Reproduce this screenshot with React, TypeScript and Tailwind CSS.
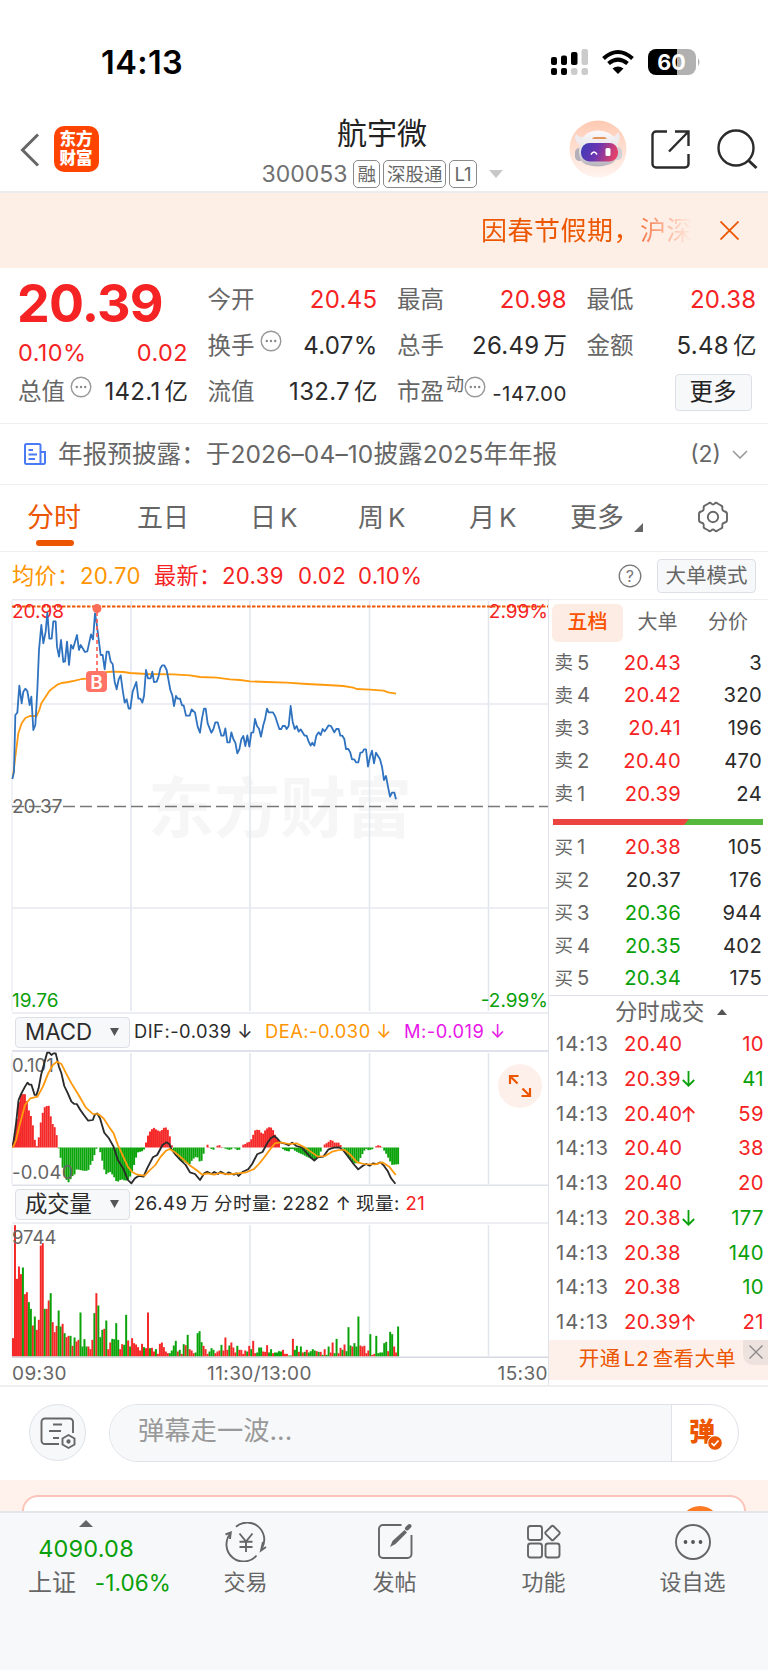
import type { ReactNode } from 'react';
import { clsx } from 'clsx';

const RED = 'text-[#f52323]';
const GREEN = 'text-[#09a009]';
const DARK = 'text-[#2b2b2b]';

const sellOrders = [
  { label: '卖', level: 5, price: '20.43', qty: 3, color: RED },
  { label: '卖', level: 4, price: '20.42', qty: 320, color: RED },
  { label: '卖', level: 3, price: '20.41', qty: 196, color: RED },
  { label: '卖', level: 2, price: '20.40', qty: 470, color: RED },
  { label: '卖', level: 1, price: '20.39', qty: 24, color: RED },
];

const buyOrders = [
  { label: '买', level: 1, price: '20.38', qty: 105, color: RED },
  { label: '买', level: 2, price: '20.37', qty: 176, color: DARK },
  { label: '买', level: 3, price: '20.36', qty: 944, color: GREEN },
  { label: '买', level: 4, price: '20.35', qty: 402, color: GREEN },
  { label: '买', level: 5, price: '20.34', qty: 175, color: GREEN },
];

const trades = [
  { price: '20.40', dir: '', qty: 10, color: RED },
  { price: '20.39', dir: 'down', qty: 41, color: GREEN },
  { price: '20.40', dir: 'up', qty: 59, color: RED },
  { price: '20.40', dir: '', qty: 38, color: RED },
  { price: '20.40', dir: '', qty: 20, color: RED },
  { price: '20.38', dir: 'down', qty: 177, color: GREEN },
  { price: '20.38', dir: '', qty: 140, color: GREEN },
  { price: '20.38', dir: '', qty: 10, color: GREEN },
  { price: '20.39', dir: 'up', qty: 21, color: RED },
];

// positive = up minute, negative = down minute
const volumes = [
  55, 394, 233, 270, 247, -267, 187, 193, -163, -143, 93, -120, 80, 110, 333, 340, -143, 143, 168, -190,
  103, 73, 92, -138, -90, 98, -70, 58, 62, -62, 32, -57, 45, 50, -132, -30, -52, -30, 30, 22,
  50, -130, 190, -153, -58, -80, 83, -108, 22, 42, -53, -52, -100, -50, 22, 37, -35, -125, 48, -30,
  55, 40, 36, 28, 18, 38, -28, 25, 132, -25, 26, 15, -22, 8, 38, 42, 28, 15, 10, -10,
  -18, -33, -47, 15, -20, 8, -37, 34, -65, 22, 18, 10, -12, -70, -76, -43, 32, 22, 8, -15,
  -25, -20, 10, 15, 18, -35, 18, 57, 20, -33, 42, 27, 12, -32, 20, 20, 8, 18, -15, 32,
  -22, 47, 10, -12, -27, -27, 15, 14, 34, -12, -22, 10, -12, -12, -16, -15, 20, 8, 8, -3,
  -3, 53, -20, -32, 14, -30, 12, -14, 20, -12, -16, -22, -18, 16, -14, 14, -5, 22, -5, -30,
  12, 42, -10, -53, 10, 26, -20, 36, -16, -88, -33, 30, -40, -30, -120, 33, 30, 32, 10, 18,
  -67, 5, 8, -62, -10, -12, -12, -40, -44, 16, -74, -67, 30, 12, -90,
];

const macdKeys: [number, number][] = [
  [34, 0], [45, 60], [56, 160], [72, 160], [80, 115], [90, 85], [97, 30], [101, 0], [107, 10], [112, 60],
  [118, 95], [124, 120], [130, 123], [136, 130], [141, 100], [147, 72], [157, 55], [162, 12], [166, -10], [170, -30],
  [176, -62], [182, -90], [192, -105], [204, -85], [210, -80], [215, -65], [235, -70], [247, -70], [255, -48], [262, -35],
  [268, -8], [274, 3], [280, -8], [286, -35], [292, -65], [298, -80], [308, -72], [318, -85], [328, -105], [340, -95],
  [352, -100], [362, -95], [374, -60], [380, -35], [386, -15], [402, -10], [406, 0], [412, 28], [418, 45], [430, 60],
  [440, 52], [450, 48], [460, 60], [468, 60], [474, 42], [480, 15], [484, -8], [492, -18], [505, -38], [520, -45],
  [530, -52], [540, -35], [547, -30], [552, -25], [558, -42], [565, -40], [570, -20], [576, 0], [581, 9], [590, -3],
  [598, -7], [604, 0], [613, 9], [620, 2], [630, -3], [645, -8], [655, 0], [668, -10], [676, 0], [684, 12],
  [690, 9], [695, 20], [700, 15], [706, 30], [716, 54], [728, 52], [735, 38], [745, 55], [757, 63], [768, 48],
  [774, 25], [780, 30], [786, 0], [800, -10], [812, -12], [817, 0], [822, -7], [835, -15], [850, -22], [860, -28],
  [880, -38], [892, -28], [900, -8], [908, 8], [918, 15], [928, 24], [938, 14], [948, 15], [956, 5], [962, -8],
  [975, -28], [990, -48], [1002, -47], [1015, -20], [1024, -3], [1032, -8], [1042, -6], [1052, 3], [1062, 8], [1070, 0],
  [1080, -15], [1092, -40], [1098, -52], [1116, -50],
];

const priceLine =
  '37,567 42,545 46,375 52,368 58,287 65,340 70,305 76,296 82,303 89,345 94,320 100,420 106,405 112,300 117,180 124,105 130,160 137,125 142,68 148,146 155,146 160,94 167,94 171,170 177,200 183,150 190,216 195,214 201,155 207,225 213,165 219,176 231,135 237,180 242,165 255,186 262,184 273,133 279,148 285,70 290,100 302,195 308,195 314,238 320,185 326,185 332,215 338,222 344,275 350,298 356,268 362,256 368,300 374,338 380,328 386,356 391,356 398,305 409,276 415,326 421,326 427,338 432,318 438,240 444,265 452,265 457,245 462,276 470,275 475,262 481,235 487,226 493,226 500,240 511,300 517,316 522,348 528,318 533,326 540,326 546,346 551,346 558,377 569,377 575,358 585,368 593,410 600,428 606,385 612,356 617,356 623,400 634,428 640,418 646,397 653,397 658,415 664,437 671,437 676,415 682,457 689,457 694,427 700,447 706,458 712,490 718,478 724,448 730,438 736,468 742,436 748,470 754,428 760,427 765,387 771,408 777,416 783,440 790,405 795,388 801,356 806,367 819,367 826,380 838,417 844,417 848,408 855,408 860,417 866,408 872,348 878,395 884,417 890,408 896,425 902,418 914,437 920,437 926,455 932,467 937,458 943,467 949,437 956,427 962,435 968,417 974,424 979,417 986,406 993,408 1003,427 1009,417 1016,417 1021,437 1027,437 1033,447 1038,477 1045,477 1051,488 1056,508 1063,508 1068,517 1075,517 1081,488 1087,487 1092,478 1098,478 1104,530 1110,500 1116,482 1122,520 1128,488 1134,498 1140,508 1146,530 1152,570 1158,558 1164,590 1170,620 1176,608 1183,608 1188,628';
const avgLine =
  '39,560 46,500 55,430 65,400 76,384 90,378 110,378 118,360 124,340 137,320 148,303 160,293 172,284 185,279 205,276 225,272 245,267 270,265 290,255 320,246 340,245 370,246 390,249 440,252 520,253 570,256 600,261 650,263 690,268 720,270 750,274 800,276 860,278 920,282 980,285 1030,288 1060,293 1070,297 1110,299 1150,302 1165,307 1188,311';
const difLine =
  '36,440 45,370 52,300 60,280 70,260 77,248 82,254 88,254 97,285 102,285 108,265 115,225 125,185 132,158 138,158 144,165 150,160 156,160 165,200 172,220 180,258 190,280 200,305 208,312 215,312 225,330 235,345 247,362 260,360 265,345 272,340 280,355 292,398 305,415 318,440 330,480 345,505 358,540 368,550 378,535 388,528 402,530 412,505 428,472 440,465 455,435 466,427 474,432 480,448 492,465 505,480 520,495 532,517 546,522 560,540 572,520 580,515 592,522 600,516 610,522 618,515 632,523 640,517 655,524 662,520 668,528 680,515 695,508 706,492 720,463 735,456 748,430 758,415 768,408 776,415 785,427 795,430 808,436 818,428 830,438 845,442 858,458 870,472 880,482 890,472 905,470 920,448 935,443 950,442 962,452 975,470 990,492 1003,508 1015,498 1025,492 1035,497 1045,490 1055,492 1065,487 1075,497 1085,512 1095,535 1107,551';
const deaLine =
  '36,442 45,420 55,375 70,315 85,295 105,290 120,260 135,220 148,195 160,185 172,192 185,220 200,250 220,285 240,322 260,342 275,342 290,355 305,380 318,400 330,435 345,470 358,500 370,516 385,524 405,527 420,510 435,495 450,470 465,452 475,447 488,455 510,475 530,495 550,510 566,524 580,520 600,524 615,519 640,523 665,520 690,517 710,508 725,492 740,472 755,450 770,430 785,427 810,432 830,430 850,440 870,455 890,470 910,468 930,455 950,450 965,450 980,463 1000,487 1020,492 1050,493 1070,487 1090,500 1108,525';

const STEP = 536 / 270; // one trading minute
const gridX = [131, 250, 369.5, 488.5];

function macdAt(x: number) {
  for (let i = 1; i < macdKeys.length; i++) {
    const [x1, y1] = macdKeys[i];
    if (x <= x1) {
      const [x0, y0] = macdKeys[i - 1];
      return y0 + ((x - x0) / (x1 - x0)) * (y1 - y0);
    }
  }
  return 0;
}

function GridLines({ top, bottom }: { top: number; bottom: number }) {
  return (
    <g stroke="#e3e6ee" strokeWidth="1.6">
      {gridX.map((x) => (
        <line key={x} x1={x} x2={x} y1={top} y2={bottom} />
      ))}
      <line x1="12" x2="12" y1={top} y2={bottom} strokeWidth="1" />
    </g>
  );
}

function Dots({ className }: { className?: string }) {
  return (
    <svg className={clsx('h-[22px] w-[22px] shrink-0', className)} viewBox="0 0 22 22" fill="none">
      <circle cx="11" cy="11" r="9.8" stroke="#999" strokeWidth="1.4" />
      <circle cx="6.8" cy="11" r="1.2" fill="#888" />
      <circle cx="11" cy="11" r="1.2" fill="#888" />
      <circle cx="15.2" cy="11" r="1.2" fill="#888" />
    </svg>
  );
}

function StatusBar() {
  return (
    <div className="flex h-[100px] items-start justify-between pt-[43px] pr-[68px] pl-[101px]">
      <span className="text-[32.5px] leading-[39px] font-semibold tracking-[0.4px] text-black">14:13</span>
      <svg className="mt-1 h-[30px] w-[152px]" viewBox="0 0 152 30">
        <g fill="#000">
          <rect x="3" y="10" width="6" height="8" rx="2" />
          <rect x="13" y="8.500" width="6" height="9.500" rx="2" />
          <rect x="23" y="5" width="6.500" height="13" rx="2" />
          <rect x="3" y="21" width="6" height="7" rx="2" />
          <rect x="13" y="21" width="6" height="7" rx="2" />
        </g>
        <g fill="#cbcbcb">
          <rect x="33.500" y="2" width="6.500" height="16" rx="2" />
          <rect x="23" y="21" width="6.500" height="7" rx="2.500" />
          <rect x="33.500" y="21" width="6.500" height="7" rx="2.500" />
        </g>
        <g fill="none" stroke="#000" strokeWidth="4">
          <path d="M55.500 11.500 Q70 -1.500 84.500 11.500" />
          <path d="M60.500 16.600 Q70 8.500 79.500 16.600" />
        </g>
        <path d="M64.500 21.500 Q70 17.500 75.500 21.500 L70 27 Z" fill="#000" />
        <clipPath id="cell">
          <rect x="100" y="2" width="48" height="26" rx="8" />
        </clipPath>
        <g clipPath="url(#cell)">
          <rect x="100" y="2" width="29" height="26" fill="#000" />
          <rect x="129" y="2" width="20" height="26" fill="#b1b1b1" />
        </g>
        <path d="M150 11 q3 4 0 8 z" fill="#b1b1b1" />
        <text x="123.500" y="22.500" textAnchor="middle" fontSize="21.5" fontWeight="700" fill="#fff">
          60
        </text>
      </svg>
    </div>
  );
}

function Robot() {
  return (
    <svg className="h-[58px] w-[58px]" viewBox="0 0 58 58">
      <defs>
        <linearGradient id="halo" x1="0" y1="0" x2="0" y2="1">
          <stop offset="0" stopColor="#ffc9b2" />
          <stop offset="1" stopColor="#fff4ef" />
        </linearGradient>
        <linearGradient id="visor" x1="0" y1="0" x2="1" y2="0.200">
          <stop offset="0" stopColor="#3a3bb8" />
          <stop offset="0.500" stopColor="#6c35b0" />
          <stop offset="1" stopColor="#e0406c" />
        </linearGradient>
        <linearGradient id="shell" x1="0" y1="0" x2="0" y2="1">
          <stop offset="0" stopColor="#fbf9fa" />
          <stop offset="0.6" stopColor="#e2dfe4" />
          <stop offset="1" stopColor="#b5b1ba" />
        </linearGradient>
      </defs>
      <circle cx="29" cy="29" r="28.500" fill="url(#halo)" />
      <path d="M10 25 Q4 19 7 14 Q10 18 17 17 Z M48 25 Q53 18 49 12 Q47 17 41 17 Z" fill="#efebee" />
      <rect x="6" y="28" width="9" height="13" rx="4.500" fill="#b3b0ba" />
      <rect x="44" y="27" width="9" height="13" rx="4.500" fill="#d3cfd6" />
      <path d="M10 31 Q11 11 29 10.500 Q48 11 49 30 Q49 42 40 44.500 Q29 48.500 17 44.500 Q10 42 10 31Z" fill="url(#shell)" />
      <path d="M23 19 L25 17 H36 L38 19 Z" fill="#e4945b" />
      <rect x="12" y="23" width="37" height="18.500" rx="8.500" fill="url(#visor)" />
      <path d="M22 34.500 q3 -5 6 0" fill="none" stroke="#fff" strokeWidth="1.600" />
      <rect x="36.500" y="28" width="5" height="8" rx="1.500" fill="#fff" />
    </svg>
  );
}

function Tag({ children }: { children: ReactNode }) {
  return (
    <span className="flex h-[28px] items-center rounded-[5px] border border-[#8a8a8a] px-[3px] text-[18.5px] leading-none text-[#666]">
      {children}
    </span>
  );
}

function Header() {
  return (
    <div className="flex h-[93px] justify-between border-b-2 border-[#ececee] pr-[10px] pl-[20px]">
      <div className="flex w-[229px] items-start pt-[26px]">
        <svg className="mt-[7px] h-[34px] w-[20px]" viewBox="0 0 20 34" fill="none" stroke="#666" strokeWidth="3">
          <path d="M18 1.500 2.500 17 18 32.500" />
        </svg>
        <div className="ml-[13.5px] flex h-[46px] w-[45px] flex-col items-center justify-center rounded-[10px] bg-[#ff4400] text-[16.5px] leading-[19px] font-black text-white">
          <span>东方</span>
          <span>财富</span>
        </div>
      </div>
      <div className="flex flex-col items-center">
        <h1 className="mt-[13px] text-[30px] leading-[40px] text-[#222]">航宇微</h1>
        <div className="mt-[7px] flex items-center gap-[3px]">
          <span className="mr-[3px] text-[23px] leading-[28px] text-[#707070]">300053</span>
          <Tag>融</Tag>
          <Tag>深股通</Tag>
          <Tag>
            <span className="px-[1px]">L1</span>
          </Tag>
          <svg className="ml-[9px] h-[8px] w-[14px]" viewBox="0 0 14 8">
            <path d="M0 0H14L7 8Z" fill="#c8c8c8" />
          </svg>
        </div>
      </div>
      <div className="flex w-[243px] items-start justify-end pt-[20px]">
        <Robot />
        <svg className="mt-[9px] ml-[23px] h-[41px] w-[41px]" viewBox="0 0 41 41" fill="none" stroke="#2b2b2b" strokeWidth="2.400">
          <path d="M17 2.500H6A3.500 3.500 0 0 0 2.500 6V35A3.500 3.500 0 0 0 6 38.500H35A3.500 3.500 0 0 0 38.500 35V25M38.500 17V2.500H25M38.500 2.500L19 22.500" />
        </svg>
        <svg className="mt-[8px] ml-[25px] h-[42px] w-[42px]" viewBox="0 0 42 42" fill="none" stroke="#2b2b2b" strokeWidth="2.400">
          <circle cx="20" cy="20" r="17.500" />
          <path d="M32 32L40.500 40" strokeWidth="3" />
        </svg>
      </div>
    </div>
  );
}

function Notice() {
  return (
    <div className="flex h-[75px] items-center justify-end bg-[#fdeee6] pr-[29px]">
      <div className="w-[211px] overflow-hidden bg-gradient-to-r from-[#ec5600] from-70% to-[#fdeee6] bg-clip-text text-[26px] leading-[36px] tracking-[0.5px] whitespace-nowrap text-transparent">
        因春节假期，沪深
      </div>
      <svg className="ml-[28px] h-[19px] w-[19px]" viewBox="0 0 19 19" stroke="#ec5600" strokeWidth="1.800">
        <path d="M.5 .5 18.500 18.500M18.500 .5 .5 18.500" />
      </svg>
    </div>
  );
}

type StatProps = { label: string; value: string; unit?: string; color?: string; extra?: ReactNode };

function Stat({ label, value, unit, color = DARK, extra }: StatProps) {
  return (
    <div className="flex h-[46px] items-center justify-between">
      <span className="flex items-center text-[23.5px] whitespace-nowrap text-[#666]">
        {label}
        {extra}
      </span>
      <span className={clsx('text-[24px] tracking-[0.3px] whitespace-nowrap', color)}>
        {value}
        {unit && <span className="ml-[4px] text-[23.5px] tracking-normal">{unit}</span>}
      </span>
    </div>
  );
}

function Quote() {
  return (
    <div className="grid h-[156px] grid-cols-[170px_170px_170px_170px] gap-x-[19.5px] border-b border-[#eee] pt-[9px] pl-[18px]">
      <div>
        <div className="ml-[-1px] h-[53px] text-[52px] leading-[53px] font-bold tracking-[-0.8px] text-[#f52323]">20.39</div>
        <div className="flex h-[39px] items-end justify-between text-[23.5px] leading-[32px] tracking-[0.4px] text-[#f52323]">
          <span>0.10%</span>
          <span>0.02</span>
        </div>
        <Stat label="总值" value="142.1" unit="亿" extra={<Dots className="mb-[10px] ml-[5px]" />} />
      </div>
      <div>
        <Stat label="今开" value="20.45" color={RED} />
        <Stat label="换手" value="4.07%" extra={<Dots className="mb-[10px] ml-[5px]" />} />
        <Stat label="流值" value="132.7" unit="亿" />
      </div>
      <div>
        <Stat label="最高" value="20.98" color={RED} />
        <Stat label="总手" value="26.49" unit="万" />
        <div className="flex h-[46px] items-center justify-between">
          <span className="flex items-center text-[23.5px] text-[#666]">
            市盈<span className="mb-[15px] ml-[2px] text-[18px]">动</span>
            <Dots className="mb-[10px]" />
          </span>
          <span className="mt-[4px] text-[20.5px] tracking-[0.5px] text-[#2b2b2b]">-147.00</span>
        </div>
      </div>
      <div>
        <Stat label="最低" value="20.38" color={RED} />
        <Stat label="金额" value="5.48" unit="亿" />
        <div className="flex h-[46px] items-center justify-end pr-[5px]">
          <button className="h-[37px] w-[77px] rounded-[4px] border border-[#dcdfe6] bg-[#f7f8fa] text-[23.5px] leading-[32px] text-[#222]">更多</button>
        </div>
      </div>
    </div>
  );
}

function NewsRow() {
  return (
    <div className="flex h-[61px] items-center border-b border-[#eee] pr-[20px] pl-[24px] text-[24.5px] text-[#666]">
      <svg className="h-[22px] w-[22px]" viewBox="0 0 22 22" fill="none" stroke="#4a7bf5" strokeWidth="2">
        <path d="M16.500 21H2.500A1.500 1.500 0 0 1 1 19.500V2.500A1.500 1.500 0 0 1 2.500 1H15A1.500 1.500 0 0 1 16.500 2.500V21H19.500A1.500 1.500 0 0 0 21 19.500V9H16.500M4.500 7H9M4.500 11.500H13M4.500 16H11" />
      </svg>
      <span className="ml-[12px] tracking-[0.13px]">年报预披露：于2026–04–10披露2025年年报</span>
      <span className="ml-auto text-[23px]">(2)</span>
      <svg className="ml-[11px] h-[9px] w-[16px]" viewBox="0 0 16 9" fill="none" stroke="#999" strokeWidth="1.600">
        <path d="M1 1 8 8 15 1" />
      </svg>
    </div>
  );
}

function PeriodTabs() {
  return (
    <div className="flex h-[67px] items-start border-b border-[#eee] pt-[14px] pl-[27px] text-[26px] leading-[38px] text-[#666]">
      <div className="flex w-[110px] flex-col items-start">
        <span className="text-[27px] text-[#ec5600]">分时</span>
        <span className="mt-[3px] ml-[9px] h-[6px] w-[38px] rounded-full bg-[#ec5600]" />
      </div>
      <span className="w-[113px]">五日</span>
      <span className="w-[108px]">日<span className="ml-[4px]">K</span></span>
      <span className="w-[111px]">周<span className="ml-[4px]">K</span></span>
      <span className="w-[101px]">月<span className="ml-[4px]">K</span></span>
      <span className="text-[27px]">更多</span>
      <svg className="mt-[24px] ml-[10px] h-[9px] w-[9px]" viewBox="0 0 9 9">
        <path d="M9 0V9H0Z" fill="#666" />
      </svg>
      <svg className="mt-[2px] ml-[54px] h-[32px] w-[32px]" viewBox="0 0 32 32" fill="none" stroke="#666" strokeWidth="1.900" strokeLinejoin="round">
        <path d="M11.500 2.500 Q13 1 14.300 2.600 Q16 4.200 17.700 2.600 Q19 1 20.500 2.500 L24 4.500 Q25.800 5.200 25.300 7.300 Q25 9.700 27.200 10.200 Q30 10.700 30 13 V19 Q30 21.300 27.200 21.800 Q25 22.300 25.300 24.700 Q25.800 26.800 24 27.500 L20.500 29.500 Q19 31 17.700 29.400 Q16 27.800 14.300 29.400 Q13 31 11.500 29.500 L8 27.500 Q6.200 26.800 6.700 24.700 Q7 22.300 4.800 21.800 Q2 21.300 2 19 V13 Q2 10.700 4.800 10.200 Q7 9.700 6.700 7.300 Q6.200 5.200 8 4.500 Z" />
        <circle cx="16" cy="16" r="5.200" />
      </svg>
    </div>
  );
}

function PriceBar() {
  return (
    <div className="flex h-[47px] items-center pr-[12px] pl-[12px] text-[22.2px] tracking-[0.3px] text-[#f52323]">
      <span className="w-[68px] text-[#ff9500]">均价：</span>
      <span className="w-[74px] text-[#ff9500]">20.70</span>
      <span className="w-[68px]">最新：</span>
      <span className="w-[76px]">20.39</span>
      <span className="w-[60px]">0.02</span>
      <span>0.10%</span>
      <svg className="ml-auto h-[24px] w-[24px]" viewBox="0 0 24 24" fill="none">
        <circle cx="12" cy="12" r="10.800" stroke="#777" strokeWidth="1.300" />
        <text x="12" y="17.500" textAnchor="middle" fontSize="16" fill="#777">?</text>
      </svg>
      <button className="ml-[15px] h-[34px] w-[99px] rounded-[4px] border border-[#dcdfe6] bg-[#f7f8fa] text-[20.5px] leading-[30px] tracking-normal text-[#666]">大单模式</button>
    </div>
  );
}

function PriceChart() {
  return (
    <svg className="block h-[415px] w-[548px]" viewBox="0 0 548 415" fontSize="19">
      <text x="148" y="233" fontSize="66" fontWeight="700" fill="#f6f6f7">东方财富</text>
      <GridLines top={2} bottom={412} />
      <g stroke="#e6e9f0" strokeWidth="1.600">
        <path d="M12 .8H548M12 105H548M12 309H548M12 414H548" />
      </g>
      <path d="M12 207.500H548" stroke="#777" strokeWidth="1.500" strokeDasharray="12 5" />
      <path d="M12 7.500H548" stroke="#ec5600" strokeWidth="1.800" strokeDasharray="3.500 1.500" />
      <text x="12" y="19" fill="#f52323">20.98</text>
      <text x="548" y="19" textAnchor="end" fill="#f52323">2.99%</text>
      <text x="12" y="214" fill="#666">20.37</text>
      <text x="12" y="407.500" fill="#09a009">19.76</text>
      <text x="548" y="407.500" textAnchor="end" fill="#09a009">-2.99%</text>
      <g transform="translate(0 -9) scale(0.33333)" fill="none" strokeLinejoin="round">
        <polyline points={avgLine} stroke="#ff9a0e" strokeWidth="5.400" />
        <polyline points={priceLine} stroke="#2f72bf" strokeWidth="5.400" />
      </g>
      <path d="M97 13V72" stroke="#ff5b4c" strokeWidth="1.600" strokeDasharray="4 3" />
      <circle cx="97" cy="9.500" r="4.500" fill="#fb6d57" />
      <rect x="86" y="72" width="21" height="21" rx="4" fill="#ff7466" />
      <text x="96.500" y="89.500" textAnchor="middle" fontSize="19" fontWeight="600" fill="#fff">B</text>
    </svg>
  );
}

function Selector({ children }: { children: ReactNode }) {
  return (
    <div className="ml-[15px] flex h-[31px] w-[115px] items-center justify-between rounded-[4px] border border-[#dcdfe6] bg-[#f7f8fa] pr-[10px] pl-[9px] text-[22.3px] leading-none tracking-normal text-[#2b2b2b]">
      {children}
      <svg className="h-[8px] w-[9px]" viewBox="0 0 9 8">
        <path d="M0 0H9L4.500 8Z" fill="#555" />
      </svg>
    </div>
  );
}

function MacdPanel() {
  return (
    <>
      <div className="flex h-[36px] items-center text-[18.3px] tracking-[0.5px] whitespace-nowrap text-[#2b2b2b]">
        <Selector>MACD</Selector>
        <span className="ml-[4px] w-[131px]">DIF:-0.039 ↓</span>
        <span className="w-[139px] text-[#ff9500]">DEA:-0.030 ↓</span>
        <span className="text-[#e815e8]">M:-0.019 ↓</span>
      </div>
      <div className="relative">
        <svg className="block h-[136px] w-[548px]" viewBox="0 0 548 136" fontSize="18.500">
          <path d="M12 1H548M12 135.500H548" stroke="#dfe2ea" strokeWidth="1.800" />
          <GridLines top={3} bottom={134} />
          {volumes.map((_, i) => {
            const v = macdAt(34 + (i + 0.5) * STEP * 2.8) / 3;
            return <rect key={i} x={12 + i * STEP} y={v > 0 ? 97.5 - v : 97.5} width={STEP} height={Math.abs(v)} fill={v > 0 ? '#f52828' : '#0aa30a'} />;
          })}
          <text x="12" y="22" fill="#666">0.101</text>
          <text x="12" y="129" letterSpacing="0.3" fill="#666">-0.040</text>
          <g transform="translate(0 -50) scale(0.35714 0.33333)" fill="none" strokeLinejoin="round">
            <polyline points={difLine} stroke="#2b2b2b" strokeWidth="5.200" />
            <polyline points={deaLine} stroke="#ff9a0e" strokeWidth="5.200" />
          </g>
        </svg>
        <div className="absolute top-[14px] right-[6px] flex h-[44px] w-[44px] items-center justify-center rounded-full bg-[#fdf0ea]">
          <svg className="h-[24px] w-[24px]" viewBox="0 0 24 24" fill="none" stroke="#ec5600" strokeWidth="2.200">
            <path d="M2 10V2H10.500M2 2L9.500 9.500M22 14V22H13.500M22 22L14.500 14.500" />
          </svg>
        </div>
      </div>
    </>
  );
}

function VolumePanel() {
  return (
    <>
      <div className="flex h-[36px] items-center text-[18.5px] tracking-[0.5px] whitespace-nowrap text-[#2b2b2b]">
        <Selector>成交量</Selector>
        <span className="ml-[4px] w-[80px]">26.49<span className="ml-[3px]">万</span></span>
        <span className="w-[142px]">分时量: 2282 ↑</span>
        <span>现量: <span className="text-[#f52323]">21</span></span>
      </div>
      <svg className="block h-[136px] w-[548px]" viewBox="0 0 548 136" fontSize="18.500">
        <path d="M12 1H548" stroke="#e6e9f0" strokeWidth="1.500" />
        <GridLines top={3} bottom={134} />
        {volumes.map((v, i) => (
          <rect key={i} x={12 + i * STEP} y={134.5 - Math.abs(v) / 3} width={STEP} height={Math.abs(v) / 3} fill={v > 0 ? '#f52828' : '#0aa30a'} />
        ))}
        <path d="M12 135.200H548" stroke="#d5d8e0" strokeWidth="1.500" />
        <text x="12" y="22" fill="#666">9744</text>
      </svg>
      <div className="flex h-[29px] items-end justify-between pl-[12px] text-[19px] leading-[27px] tracking-[0.4px] text-[#666]">
        <span className="w-[195px]">09:30</span>
        <span className="flex-1">11:30/13:00</span>
        <span>15:30</span>
      </div>
    </>
  );
}

function OrderRow({ row }: { row: (typeof sellOrders)[number] }) {
  return (
    <div className="flex h-[32.75px] items-center pr-[6px] pl-[5.5px] text-[20.2px] tracking-[0.3px]">
      <span className="w-[22.5px] text-[18.5px] text-[#666]">{row.label}</span>
      <span className="w-[20px] text-[#666]">{row.level}</span>
      <span className={clsx('w-[84px] text-right', row.color)}>{row.price}</span>
      <span className="flex-1 text-right text-[#2b2b2b]">{row.qty}</span>
    </div>
  );
}

function OrderBook() {
  return (
    <div className="w-[220px] border-l border-[#dfe2ea]">
      <div className="flex h-[47.5px] items-start border-t border-[#eceef2] pt-[4px] pl-[3px] text-[20px] text-[#666]">
        <span className="h-[38px] w-[71px] rounded-[6px] bg-[#fdece4] text-center leading-[36px] font-medium text-[#fb5200]">五档</span>
        <span className="w-[69px] text-center leading-[36px]">大单</span>
        <span className="w-[72px] text-center leading-[36px]">分价</span>
      </div>
      {sellOrders.map((row) => (
        <OrderRow key={row.level} row={row} />
      ))}
      <div className="mt-[8.5px] mb-[6.5px] flex h-[6px] pr-[5px] pl-[4px]">
        <svg className="h-[6px] w-full" viewBox="0 0 210 6" preserveAspectRatio="none">
          <path d="M0 0H210V6H0Z" fill="#55b83c" />
          <path d="M0 0H136L131 6H0Z" fill="#ec4440" />
        </svg>
      </div>
      {buyOrders.map((row) => (
        <OrderRow key={row.level} row={row} />
      ))}
      <div className="flex h-[32px] items-center border-t border-[#dfe2ea] pl-[66px] text-[22.3px] text-[#666]">
        分时成交
        <svg className="ml-[13px] h-[6px] w-[10px]" viewBox="0 0 10 6">
          <path d="M0 6H10L5 0Z" fill="#555" />
        </svg>
      </div>
      {trades.map((t, i) => (
        <div key={i} className="flex h-[34.75px] items-center pr-[4px] pl-[7px] text-[20.3px] tracking-[0.4px]">
          <span className="w-[68px] tracking-[1px] text-[#666]">14:13</span>
          <span className="w-[58px] text-[#f52323]">{t.price}</span>
          <span className={clsx('w-[14px]', t.color)}>
            {t.dir && (
              <svg className={clsx('h-[16px] w-[13px]', t.dir === 'up' && 'rotate-180')} viewBox="0 0 13 16" fill="none" stroke="currentColor" strokeWidth="1.800">
                <path d="M6.500 0V14.500M.8 9 6.500 14.700 12.200 9" />
              </svg>
            )}
          </span>
          <span className={clsx('flex-1 text-right', t.color)}>{t.qty}</span>
        </div>
      ))}
      <div className="relative flex h-[40px] items-center justify-center bg-[#fdf0ea] pr-[2px] text-[20.5px] tracking-[0.4px] text-[#ec5600]">
        开通<span className="mx-[3px] tracking-[1px]">L2</span>查看大单
        <span className="absolute top-0 right-0 flex h-[25px] w-[25px] items-center justify-center rounded-bl-[10px] bg-[#eee2de]">
          <svg className="h-[14px] w-[14px]" viewBox="0 0 14 14" stroke="#888" strokeWidth="1.400">
            <path d="M.5 .5 13.500 13.500M13.500 .5 .5 13.500" />
          </svg>
        </span>
      </div>
    </div>
  );
}

function BarrageInput() {
  return (
    <div className="flex h-[95px] items-start border-t-2 border-[#eeeff1] px-[29px] pt-[17px]">
      <div className="flex h-[57px] w-[57px] items-center justify-center rounded-full border border-[#dfe2e8] bg-[#f7f8fa]">
        <svg className="h-[34px] w-[36px]" viewBox="0 0 36 34" fill="none" stroke="#666" strokeWidth="1.900">
          <path d="M33 17V6A3.500 3.500 0 0 0 29.500 2.500H5A3.500 3.500 0 0 0 1.500 6V24.500A3.500 3.500 0 0 0 5 28H19M13 8.500H22M9 15H21M13 22H19" />
          <path d="M28.500 19 34.500 22.500V28.500L28.500 32 22.500 28.500V22.500Z" />
          <circle cx="28.500" cy="25.500" r="1.200" fill="#666" />
        </svg>
      </div>
      <div className="ml-[23px] flex h-[58px] w-[630px] overflow-hidden rounded-full border border-[#dfe2e8] bg-white">
        <div className="w-[562px] border-r border-[#dfe2e8] bg-[#f7f8fa] pl-[28px] text-[26.3px] leading-[52px] text-[#999]">弹幕走一波...</div>
        <div className="relative pl-[17px] text-[26px] leading-[53px] font-black text-[#ec5600]">
          弹
          <svg className="absolute top-[30px] left-[35px] h-[16px] w-[16px]" viewBox="0 0 16 16">
            <circle cx="8" cy="8" r="7.300" fill="#ec5600" stroke="#fff" strokeWidth="1" />
            <path d="M4.500 8.200 7 10.600 11.500 5.500" fill="none" stroke="#fff" strokeWidth="1.700" />
          </svg>
        </div>
      </div>
    </div>
  );
}

function NavItem({ label, children }: { label: string; children: ReactNode }) {
  return (
    <div className="flex w-[149px] flex-col items-center text-[22px] text-[#666]">
      <svg className="mt-[9px] h-[40px] w-[44px]" viewBox="0 0 44 40" fill="none" stroke="#666" strokeWidth="1.900">
        {children}
      </svg>
      <span className="mt-[3px] leading-[34px]">{label}</span>
    </div>
  );
}

function BottomNav() {
  return (
    <div className="flex h-[159px] border-t-2 border-[#e5e6e9] bg-[#f7f8fa]">
      <div className="w-[171px] shrink-0">
        <svg className="mt-[7px] ml-[79px] h-[7px] w-[14px]" viewBox="0 0 14 7">
          <path d="M0 7H14L7 0Z" fill="#666" />
        </svg>
        <div className="mt-[5px] w-[172px] text-center text-[23.5px] leading-[34px] tracking-[0.2px] text-[#09a009]">4090.08</div>
        <div className="flex items-center justify-between pl-[28px] leading-[34px]">
          <span className="text-[24px] text-[#666]">上证</span>
          <span className="text-[22.5px] tracking-[0.1px] text-[#09a009]">-1.06%</span>
        </div>
      </div>
      <NavItem label="交易">
        <path d="M12 4.800A17 17 0 0 1 38 26M32.500 33.500A17 17 0 0 1 6.500 11.500M1.500 12.500 6.800 10.500 6 17M42 25 37 28.500 39 20" />
        <path d="M15.500 11.500 22 19.500 28.500 11.500M22 19.500V30M15.500 19.800H28.500M15.500 25H28.500" />
      </NavItem>
      <NavItem label="发帖">
        <path d="M28.500 3H10A4 4 0 0 0 6 7V32A4 4 0 0 0 10 36H34.500A4 4 0 0 0 38.500 32V13" />
        <path d="M17 25 19.500 19 31.500 8 34 10.500 22.500 22Z" fill="#666" stroke="none" />
        <path d="M34 6.500 36.500 4" strokeWidth="4" strokeLinecap="round" />
      </NavItem>
      <NavItem label="功能">
        <rect x="6" y="4" width="14" height="14" rx="2.500" />
        <rect x="6" y="21.500" width="14" height="14" rx="2.500" />
        <rect x="23.500" y="21.500" width="14" height="14" rx="2.500" />
        <rect x="25" y="5.500" width="11" height="11" rx="1.500" transform="rotate(45 30.500 11)" />
      </NavItem>
      <NavItem label="设自选">
        <circle cx="22" cy="20" r="17" />
        <g fill="#555" stroke="none">
          <circle cx="14.500" cy="20" r="1.900" />
          <circle cx="22" cy="20" r="1.900" />
          <circle cx="29.500" cy="20" r="1.900" />
        </g>
      </NavItem>
    </div>
  );
}

export default function App() {
  return (
    <div className="h-[1670px] w-[768px] overflow-hidden bg-white font-['Inter','Noto_Sans_CJK_SC',sans-serif]">
      <StatusBar />
      <Header />
      <Notice />
      <Quote />
      <NewsRow />
      <PeriodTabs />
      <PriceBar />
      <div className="flex h-[786px]">
        <div className="w-[548px]">
          <PriceChart />
          <MacdPanel />
          <VolumePanel />
        </div>
        <OrderBook />
      </div>
      <BarrageInput />
      <div className="h-[31px] overflow-hidden bg-[#fff2ec] px-[22px] pt-[15px]">
        <div className="relative h-[60px] rounded-[16px] border-2 border-[#fdc3b8] bg-white">
          <span className="absolute top-[9px] right-[24px] h-[40px] w-[40px] rounded-full bg-[#ff7a22]" />
        </div>
      </div>
      <BottomNav />
    </div>
  );
}
